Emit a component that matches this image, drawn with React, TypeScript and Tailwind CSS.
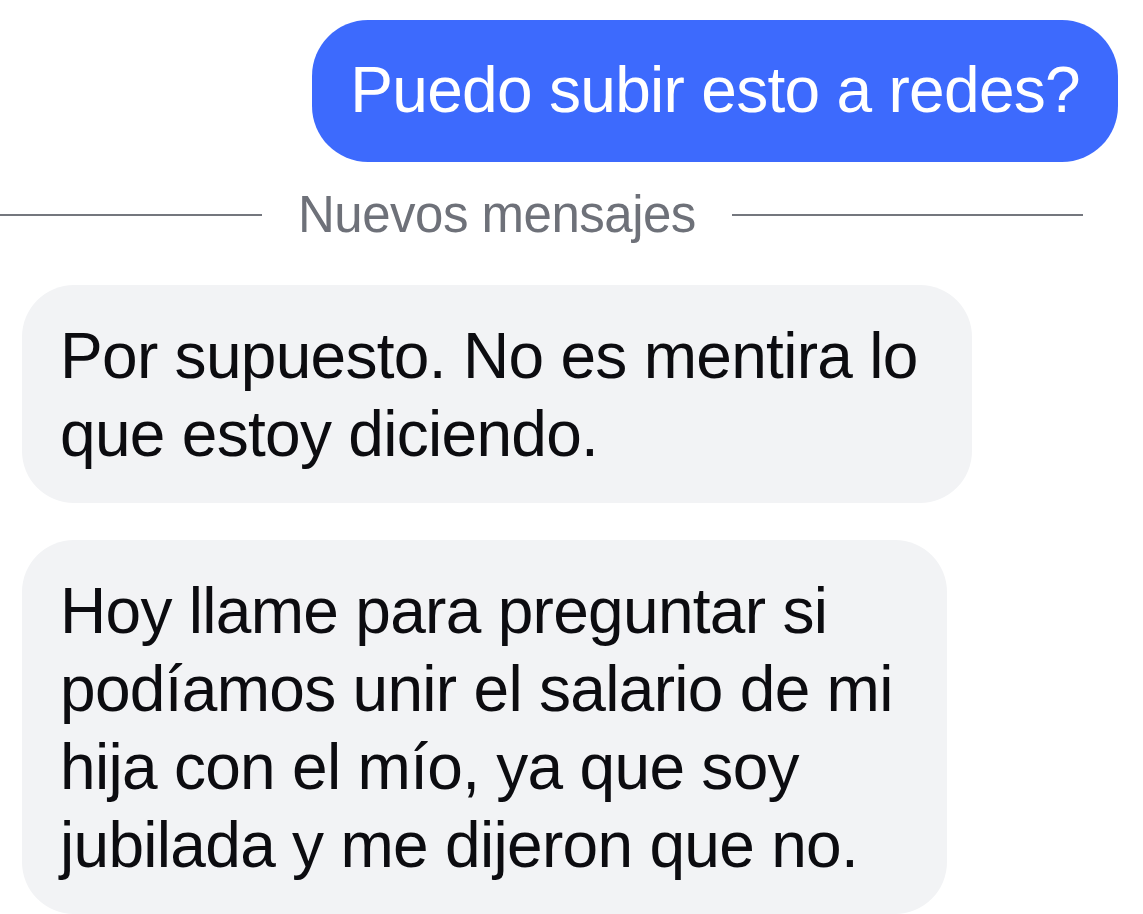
const font = { fontFamily: '"Liberation Sans", Arial, sans-serif' }

const firstReply = ['Por supuesto. No es mentira lo', 'que estoy diciendo.']
const secondReply = [
  'Hoy llame para preguntar si',
  'podíamos unir el salario de mi',
  'hija con el mío, ya que soy',
  'jubilada y me dijeron que no.',
]

function Incoming({ lines }: { lines: string[] }) {
  return (
    <div className="self-start rounded-[52px] bg-[#f2f3f5] pt-[32px] pb-[30px] pl-[38px] pr-[54px] text-[64px] leading-[78px] tracking-[-0.7px] text-[#0c0c10]">
      {lines.map((line) => (
        <div key={line} className="whitespace-nowrap">
          {line}
        </div>
      ))}
    </div>
  )
}

export default function App() {
  return (
    <main className="flex h-[914px] w-[1143px] flex-col overflow-hidden bg-white pt-[20px] pl-[22px]" style={font}>
      <div className="mr-[25px] self-end rounded-[56px] bg-[#3d6afd] pt-[30px] pb-[31px] pl-[38px] pr-[38px] text-[64px] leading-[81px] tracking-[-0.7px] whitespace-nowrap text-white">
        Puedo subir esto a redes?
      </div>

      <div className="-ml-[22px] mt-[27px] mr-[60px] flex items-center">
        <div className="h-[2px] w-[262px] bg-[#74777e]" />
        <span className="mx-[36px] text-[51px] leading-none tracking-[-0.5px] text-[#6e7179]">Nuevos mensajes</span>
        <div className="h-[2px] flex-1 bg-[#74777e]" />
      </div>

      <div className="mt-[45px] flex flex-col gap-[37px]">
        <Incoming lines={firstReply} />
        <Incoming lines={secondReply} />
      </div>
    </main>
  )
}
